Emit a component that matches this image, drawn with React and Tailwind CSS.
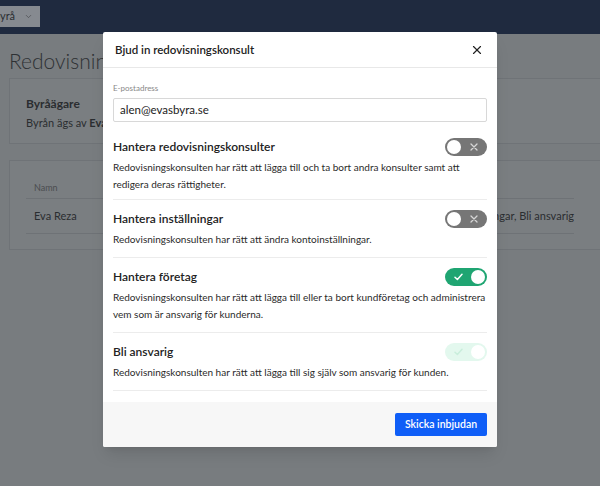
import { X, ChevronDown } from 'lucide-react'

const sections = [
  {
    title: 'Hantera redovisningskonsulter',
    text: 'Redovisningskonsulten har rätt att lägga till och ta bort andra konsulter samt att redigera deras rättigheter.',
    state: 'off',
  },
  {
    title: 'Hantera inställningar',
    text: 'Redovisningskonsulten har rätt att ändra kontoinställningar.',
    state: 'off',
  },
  {
    title: 'Hantera företag',
    text: 'Redovisningskonsulten har rätt att lägga till eller ta bort kundföretag och administrera vem som är ansvarig för kunderna.',
    state: 'on',
  },
  {
    title: 'Bli ansvarig',
    text: 'Redovisningskonsulten har rätt att lägga till sig själv som ansvarig för kunden.',
    state: 'disabled',
  },
]

function Toggle({ state }) {
  if (state === 'off') {
    return (
      <div className="relative w-[42px] h-[18px] rounded-full bg-[#767676] shrink-0">
        <span className="absolute left-[2px] top-[2px] w-[14px] h-[14px] rounded-full bg-white" />
        <svg className="absolute left-[25px] top-[5px]" width="8" height="8" viewBox="0 0 8 8">
          <path d="M1 1L7 7M7 1L1 7" stroke="#d6d6d6" strokeWidth="1.3" strokeLinecap="round" />
        </svg>
      </div>
    )
  }
  const disabled = state === 'disabled'
  return (
    <div className={disabled ? 'relative w-[42px] h-[18px] rounded-full bg-[#e3f8ee] shrink-0' : 'relative w-[42px] h-[18px] rounded-full bg-[#1fa572] shrink-0'}>
      <svg className="absolute left-[9px] top-[5px]" width="9" height="8" viewBox="0 0 9 8">
        <path d="M1 4.2L3.4 6.5L8 1.3" fill="none" stroke={disabled ? '#c9eedc' : '#ffffff'} strokeWidth="1.5" strokeLinecap="round" strokeLinejoin="round" />
      </svg>
      <span className="absolute right-[2px] top-[2px] w-[14px] h-[14px] rounded-full bg-white" />
    </div>
  )
}

function Background() {
  return (
    <div className="flex flex-col h-full text-[#2a2d30]">
      <div className="h-[34px] bg-[#1f2a3f] pt-[6px] shrink-0">
        <div className="h-[21px] w-[40px] bg-[#868a90] flex items-center overflow-hidden">
          <span className="text-[11px] whitespace-nowrap ml-[-6px]">byrå</span>
          <ChevronDown size={9} strokeWidth={1.5} className="ml-[9px] text-[#3a3d40]" />
        </div>
      </div>
      <div className="pl-[9px]">
        <h1 className="text-[21px] font-light leading-[28px] mt-[13px] text-[#2e3134] whitespace-nowrap">Redovisningskonsulter</h1>
        <div className="mt-[3px] w-[610px] h-[66px] border border-[#6f7377] bg-[#7a7e81] px-[16px] pt-[17px]">
          <div className="text-[12px] font-bold leading-[16px]">Byråägare</div>
          <div className="text-[11px] leading-[16px] mt-[3px]">
            Byrån ägs av <span className="font-bold">Eva Reza</span>
          </div>
        </div>
        <div className="mt-[16px] w-[610px] h-[90px] border border-[#6f7377] bg-[#7a7e81] pl-[16px] pr-[44px] pt-[19px]">
          <div className="border-b border-[#6e7276] h-[19px] pl-[8px] text-[9px] text-[#4a4d50] leading-[16px]">Namn</div>
          <div className="border-b border-[#6e7276] h-[35px] pl-[8px] flex items-center justify-between text-[11px]">
            <span>Eva Reza</span>
            <span>Hantera inställningar, Bli ansvarig</span>
          </div>
        </div>
      </div>
    </div>
  )
}

export default function App() {
  return (
    <div className="relative w-[600px] h-[486px] overflow-hidden bg-[#787c7f] font-['Lato',sans-serif]">
      <Background />

      <div className="absolute left-[103px] top-[32px] w-[394px] bg-white rounded-[2px] shadow-lg text-[#222]">
        <div className="h-[36px] px-[10px] flex items-center justify-between border-b border-[#e8e8e8]">
          <h2 className="text-[11.5px] font-semibold pl-[2px]">Bjud in redovisningskonsult</h2>
          <X size={14} strokeWidth={2} className="mr-[3px] text-[#222]" />
        </div>

        <div className="px-[10px] pt-[15px] pb-[11px]">
          <label className="block text-[8px] leading-[11px] text-[#888]">E-postadress</label>
          <div className="mt-[4px] h-[24px] border border-[#d8d8d8] rounded-[2px] px-[6px] flex items-center text-[11.5px] text-[#222]">
            alen@evasbyra.se
          </div>

          {sections.map((s, i) => (
            <div key={s.title} className={i === 0 ? 'pt-[16px] pb-[6px] border-b border-[#ececec]' : 'pt-[10px] pb-[9px] border-b border-[#ececec]'}>
              <div className="flex items-center justify-between h-[18px]">
                <h3 className="text-[12px] font-semibold">{s.title}</h3>
                <Toggle state={s.state} />
              </div>
              <p className="mt-[3px] text-[10px] leading-[17px] text-[#2a2a2a]">{s.text}</p>
            </div>
          ))}
        </div>

        <div className="h-[45px] bg-[#f7f7f7] flex items-center justify-end px-[10px] rounded-b-[2px]">
          <button className="h-[23px] w-[92px] bg-[#0f5ef7] text-white text-[10.5px] font-semibold rounded-[2px]">
            Skicka inbjudan
          </button>
        </div>
      </div>
    </div>
  )
}
